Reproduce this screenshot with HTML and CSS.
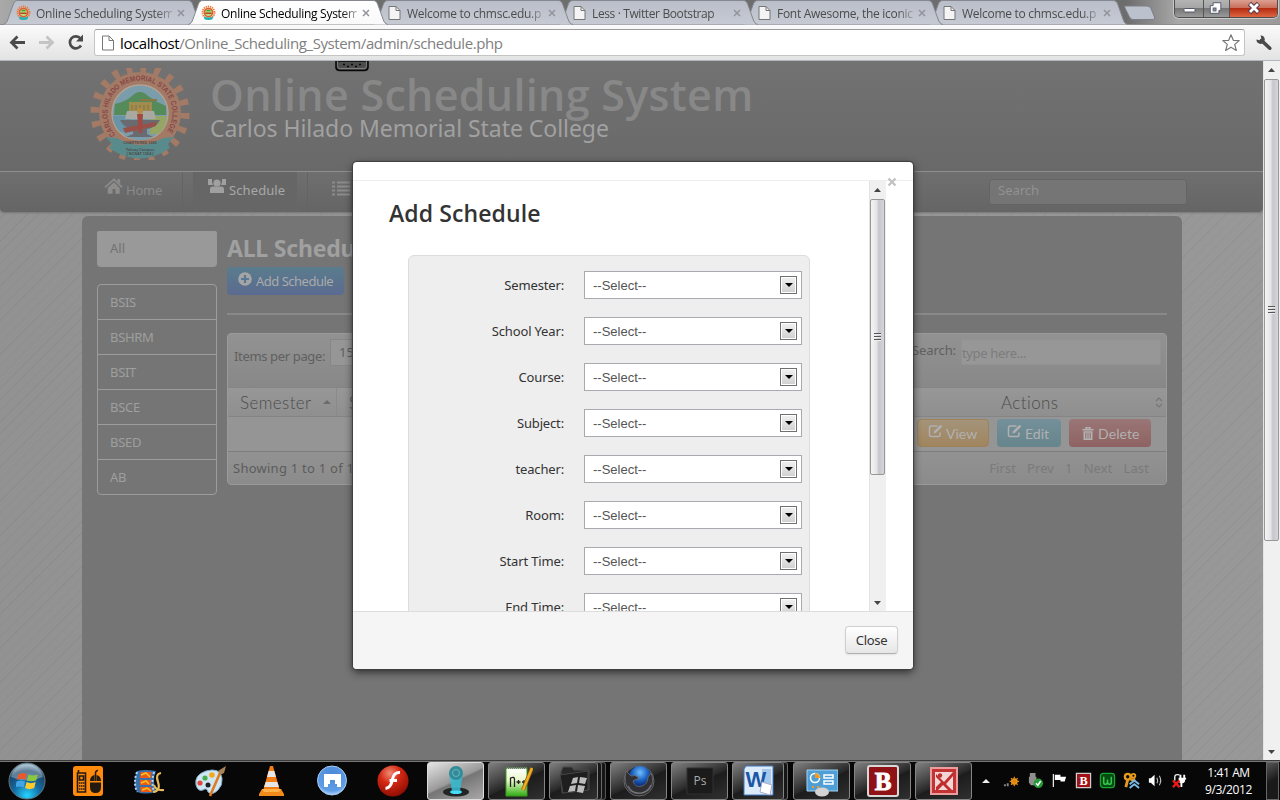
FILE: index.html
```html
<!DOCTYPE html>
<html lang="en">
<head>
<meta charset="utf-8">
<title>Online Scheduling System</title>
<link rel="stylesheet" href="styles.css">
</head>
<body>
<svg width="0" height="0" class="defs">
  <defs>
    <linearGradient id="tabg" x1="0" y1="0" x2="0" y2="1"><stop offset="0" stop-color="#b9bec9"/><stop offset="1" stop-color="#c5cad3"/></linearGradient>
    <linearGradient id="tabw" x1="0" y1="0" x2="0" y2="1"><stop offset="0" stop-color="#ffffff"/><stop offset="1" stop-color="#f9f9f9"/></linearGradient>
    <radialGradient id="orb" cx=".5" cy=".9" r=".85"><stop offset="0" stop-color="#25d4ff"/><stop offset=".45" stop-color="#136aa0"/><stop offset=".8" stop-color="#1c4568"/><stop offset="1" stop-color="#8fb0c4"/></radialGradient>
    <radialGradient id="flash" cx=".4" cy=".25" r=".8"><stop offset="0" stop-color="#f08c78"/><stop offset=".4" stop-color="#d42a14"/><stop offset="1" stop-color="#8a0a02"/></radialGradient>
    <radialGradient id="mx" cx=".5" cy=".3" r=".7"><stop offset="0" stop-color="#4a88d8"/><stop offset=".8" stop-color="#5f9de6"/><stop offset="1" stop-color="#b4d4f8"/></radialGradient>
    <radialGradient id="fox" cx=".5" cy=".3" r=".6"><stop offset="0" stop-color="#6fc0ff"/><stop offset=".6" stop-color="#1b5fc0"/><stop offset="1" stop-color="#0a2c72"/></radialGradient>
    <linearGradient id="np" x1="0" y1="0" x2="0" y2="1"><stop offset="0" stop-color="#fff"/><stop offset=".45" stop-color="#e8f6c8"/><stop offset="1" stop-color="#2fae10"/></linearGradient>
    <symbol id="tab" viewBox="0 0 200 25" preserveAspectRatio="none"><path d="M0 24.5C3 24 4 22 5 19L10 5C11 2 12 .5 15 .5H185C188 .5 189 2 190 5L195 19C196 22 197 24 200 24.5" stroke="#85878e"/></symbol>
    <symbol id="doc" viewBox="0 0 14 16"><path d="M1.500 1.500H8.500L12.500 5.500V14.500H1.500Z" fill="#f4f4f4" stroke="#757575"/><path d="M8.500 1.500V5.500H12.500" fill="none" stroke="#757575"/></symbol>
    <symbol id="fav" viewBox="0 0 16 16"><circle cx="8" cy="7.500" r="6.400" fill="none" stroke="#ef7a3c" stroke-width="2" stroke-dasharray="1.4 .8"/><circle cx="8" cy="7.500" r="5.200" fill="#e45a2c"/><circle cx="8" cy="7.500" r="3.600" fill="#b9e07a"/><path d="M4.600 7.500H11.400V9H4.600Z" fill="#b23a2a"/><path d="M5 6Q8 3 11 6Z" fill="#37a040"/><path d="M3 11.500Q8 14 13 11.500L12 15Q8 16 4 15Z" fill="#1fb2b0"/></symbol>
    <symbol id="x" viewBox="0 0 8 8"><path d="M1 1L7 7M7 1L1 7" fill="none" stroke="#92949a" stroke-width="1.500"/></symbol>
    <symbol id="edit" viewBox="0 0 16 14"><path d="M9.500 2H3Q1.500 2 1.500 3.500V11Q1.500 12.500 3 12.500H10.500Q12 12.500 12 11V8.500" fill="none" stroke="#b0b0b0" stroke-width="1.500"/><path d="M5.500 9.500L6 7.300L12.500 .8L14.300 2.500L7.800 9Z" fill="#b0b0b0"/></symbol>
    <symbol id="win" viewBox="0 0 22 20"><path d="M2 4Q6 1.500 10 3.500L8.700 9Q5 7 .8 9Z" fill="#e8592b"/><path d="M11.500 4Q15 6 20 4L18.500 9.500Q14 11 10 9.500Z" fill="#8cc63f"/><path d="M.5 10.500Q4.500 8.500 8.300 10.500L7 16Q3 14 -1 16Z" fill="#41a5e8"/><path d="M9.700 11Q13.500 13 18 11L16.700 16.500Q12 18.500 8.300 16.500Z" fill="#fdca2e"/></symbol>
    <symbol id="bd" viewBox="0 0 32 32"><rect x="1" y="1" width="30" height="30" rx="2" fill="#8f1216" stroke="#d8d8d8" stroke-width="2"/></symbol>
  </defs>
</svg>

<div class="screen">
  <div class="tabstrip">
    <div class="tab t1"><svg class="shape"><use href="#tab" fill="url(#tabg)"/></svg><svg class="ico"><use href="#fav"/></svg><span>Online Scheduling System</span><svg class="cx"><use href="#x"/></svg></div>
    <div class="tab t2"><svg class="shape"><use href="#tab" fill="url(#tabw)"/></svg><svg class="ico"><use href="#fav"/></svg><span>Online Scheduling System</span><svg class="cx"><use href="#x"/></svg></div>
    <div class="tab t3"><svg class="shape"><use href="#tab" fill="url(#tabg)"/></svg><svg class="ico"><use href="#doc"/></svg><span>Welcome to chmsc.edu.p</span><svg class="cx"><use href="#x"/></svg></div>
    <div class="tab t4"><svg class="shape"><use href="#tab" fill="url(#tabg)"/></svg><svg class="ico"><use href="#doc"/></svg><span>Less · Twitter Bootstrap</span><svg class="cx"><use href="#x"/></svg></div>
    <div class="tab t5"><svg class="shape"><use href="#tab" fill="url(#tabg)"/></svg><svg class="ico"><use href="#doc"/></svg><span>Font Awesome, the iconic</span><svg class="cx"><use href="#x"/></svg></div>
    <div class="tab t6"><svg class="shape"><use href="#tab" fill="url(#tabg)"/></svg><svg class="ico"><use href="#doc"/></svg><span>Welcome to chmsc.edu.p</span><svg class="cx"><use href="#x"/></svg></div>
    <svg class="newtab" viewBox="0 0 32 16"><path d="M1 1H23Q26 1 27 3.500L30.500 12Q31.500 14.500 29 14.500H9Q6.500 14.500 5.500 12L1 3Q.4 1 1 1Z" fill="#bcc2cd" stroke="#7d7f86"/></svg>
    <div class="winbtns">
      <div class="wb"><svg viewBox="0 0 28 17"><rect x="9" y="8.500" width="11" height="3.500" rx=".8" fill="#fff" stroke="#55596a"/></svg></div>
      <div class="wb mid"><svg viewBox="0 0 26 17"><path d="M9.500 2.500H17.500V10.500H15.500V13.500H6.500V5.500H9.500Z" fill="#fff" stroke="#55596a"/><rect x="9.500" y="8" width="3" height="3" fill="#999" stroke="#55596a"/></svg></div>
      <div class="wb red"><svg viewBox="0 0 47 17"><path d="M19.500 3.500L28.500 12.500M28.500 3.500L19.500 12.500" stroke="#55384a" stroke-width="4.600"/><path d="M20 4L28 12M28 4L20 12" stroke="#fff" stroke-width="2.800"/></svg></div>
    </div>
  </div>

  <div class="toolbar">
    <svg class="tb-nav" viewBox="0 0 90 35">
      <path d="M25 17.500H12M17.500 11.500L11.500 17.500L17.500 23.500" fill="none" stroke="#4a4a4a" stroke-width="2.800"/>
      <path d="M39 17.500H52M46.500 11.500L52.500 17.500L46.500 23.500" fill="none" stroke="#c4c4c4" stroke-width="2.800"/>
      <path d="M80.500 13.500A6 6 0 1 0 81 20.500" fill="none" stroke="#4a4a4a" stroke-width="2.700"/><path d="M83 9.500V16.500H76Z" fill="#4a4a4a"/>
    </svg>
    <div class="omni">
      <svg class="page" viewBox="0 0 14 16"><path d="M1.500 1H8L12.500 5.500V15H1.500Z" fill="#fff" stroke="#777"/><path d="M8 1V5.500H12.500" fill="none" stroke="#777"/></svg>
      <span class="url"><b>localhost</b>/Online_Scheduling_System/admin/schedule.php</span>
      <svg class="star" viewBox="0 0 20 20"><path d="M10 1.800L12.300 7.300L18.200 7.600L13.700 11.400L15.300 17.400L10 14.200L4.700 17.400L6.300 11.400L1.800 7.600L7.700 7.300Z" fill="#fff" stroke="#777" stroke-width="1.200" stroke-linejoin="round"/></svg>
    </div>
    <svg class="wrench" viewBox="0 0 18 18"><path d="M6.500 6.500L14.800 14.200" stroke="#4a4a4a" stroke-width="3.600" stroke-linecap="round"/><path d="M1.500 5.500A4 4 0 0 0 8.500 8.500A4 4 0 0 0 5.500 1.500L6.500 4.500L4.500 6.200Z" fill="#4a4a4a"/></svg>
  </div>

  <div class="viewport">
    <div class="site">
      <div class="masthead">
        <svg class="seal" viewBox="0 0 100 92">
          <circle cx="50" cy="45" r="45" fill="none" stroke="#a27a66" stroke-width="9" stroke-dasharray="5.800 8.340"/>
          <circle cx="50" cy="45" r="41" fill="#a27a66"/>
          <circle cx="50" cy="45" r="28" fill="#7a9cab" stroke="#b0a294" stroke-width="1.500"/>
          <path d="M25 36Q35 34 42 28Q50 20 58 28Q66 34 76 38V47H24Z" fill="#558a5a"/>
          <path d="M23 48H40V64H30Q23 56 23 48Z" fill="#6794a6"/><path d="M60 48H77Q76 60 68 66H60Z" fill="#94a566"/>
          <path d="M39 34H62V44H39Z" fill="#a08c4f"/><path d="M50 31H67V33H50Z" fill="#8b7743"/><path d="M42 37V42M46 37V42M50 37V42M54 37V42M58 37V42" stroke="#84733f"/><path d="M37 43H64L66 51H35Z" fill="#a9a9a1"/>
          <path d="M30 52H70Q66 60 57 61V66L63 69H36L43 66V61Q34 60 30 52Z" fill="#6a6b71"/>
          <path d="M33 60L66 54V58L35 65Z" fill="#985149"/><path d="M47 46H53L52 65H49Z" fill="#a04a42"/><circle cx="50" cy="43" r="3" fill="#b38c45"/>
          <path d="M29 66Q50 79 71 66L66 74Q50 80 34 74Z" fill="#a27a66"/>
          <path d="M16 69L27 70Q50 84 73 70L84 69L78 76L80 80Q50 101 19 80L22 76Z" fill="#598b8c"/>
          <path id="arc" d="M25.500 66.500A32.500 32.500 0 1 1 74.500 66.500" fill="none"/>
          <text class="seal-top"><textPath href="#arc" textLength="144" lengthAdjust="spacingAndGlyphs">CARLOS HILADO MEMORIAL STATE COLLEGE</textPath></text>
          <text x="50" y="76" class="seal-s">CHARTERED 1983</text>
          <text x="50" y="82.500" class="seal-s">Talisay Campus</text>
          <text x="50" y="87" class="seal-s">( NOSAT 1954 )</text>
        </svg>
        <div class="brand"><div class="b1">Online Scheduling System</div><div class="b2">Carlos Hilado Memorial State College</div></div>
      </div>
      <div class="navbar">
        <div class="nav home"><svg viewBox="0 0 22 18"><path d="M2 9.500L11.500 1L20 9.500" fill="none" stroke="#8c8c8c" stroke-width="1.800"/><path d="M5 10L11.500 4L17.500 10V16H13V11H10V16H5ZM15 1H18V6L15 3Z" fill="#8c8c8c"/></svg><span>Home</span></div>
        <div class="nav sched"><svg viewBox="0 0 18 16"><circle cx="9" cy="5" r="3.600" fill="#a0a0a0"/><path d="M2 15V11Q2 8.500 5 8.500H13Q16 8.500 16 11V15Z" fill="#a0a0a0"/><path d="M0 1H4V4L5 7H0ZM18 1H14V4L13 7H18Z" fill="#a0a0a0"/></svg><span>Schedule</span></div>
        <div class="nav list"><svg viewBox="0 0 18 15"><path d="M0 1.500H3M5 1.500H18M0 5.500H3M5 5.500H18M0 9.500H3M5 9.500H18M0 13.500H3M5 13.500H18" stroke="#8b8b8b" stroke-width="2.200"/></svg></div>
        <div class="nsearch">Search</div>
      </div>
      <div class="container">
        <div class="side">
          <div class="all">All</div>
          <div class="courses"><div>BSIS</div><div>BSHRM</div><div>BSIT</div><div>BSCE</div><div>BSED</div><div>AB</div></div>
        </div>
        <div class="main">
          <h2>ALL Schedule</h2>
          <div class="add"><svg viewBox="0 0 14 14"><circle cx="7" cy="7" r="6.800" fill="#a5a5a5"/><path d="M7 3V11M3 7H11" stroke="#587897" stroke-width="2.200"/></svg><span>Add Schedule</span></div>
          <div class="rule"></div>
          <div class="table">
            <div class="tools"><span class="ipp">Items per page:</span><span class="ippsel">15</span><span class="slabel">Search:</span><span class="sbox">type here...</span></div>
            <div class="thead"><div class="th c1"><span>Semester</span><svg viewBox="0 0 8 4"><path d="M0 4L4 0L8 4Z" fill="#6c6c6c"/></svg></div><div class="th c2"><span>S</span></div><div class="th c3"><span>Actions</span><svg viewBox="0 0 8 11"><path d="M1 4L4 1L7 4M1 7L4 10L7 7" fill="none" stroke="#767676" stroke-width="1.200"/></svg></div></div>
            <div class="trow"><div class="btn view"><svg class="e"><use href="#edit"/></svg><span>View</span></div><div class="btn ed"><svg class="e"><use href="#edit"/></svg><span>Edit</span></div><div class="btn del"><svg class="t" viewBox="0 0 12 13"><path d="M4 2V.7H8V2M.5 2.700H11.500" fill="none" stroke="#b2b2b2" stroke-width="1.400"/><path d="M1.500 4.200H10.500V13H1.500Z" fill="#b2b2b2"/><path d="M3.800 5.500V11.500M6 5.500V11.500M8.200 5.500V11.500" stroke="#966a6a"/></svg><span>Delete</span></div></div>
            <div class="tfoot"><span class="show">Showing 1 to 1 of 1</span><span class="pg">First</span><span class="pg">Prev</span><span class="pg">1</span><span class="pg">Next</span><span class="pg">Last</span></div>
          </div>
        </div>
      </div>
    </div>
    <div class="sbar page-sb">
      <svg class="arr" viewBox="0 0 7 4"><path d="M0 4L3.500 0L7 4Z" fill="#444"/></svg>
      <div class="thumb"><i></i><i></i><i></i></div>
      <svg class="arr" viewBox="0 0 7 4"><path d="M0 0L3.500 4L7 0Z" fill="#444"/></svg>
    </div>
    <svg class="grip" viewBox="0 0 34 11"><path d="M1 0V6Q1 9.500 5 9.500H29Q33 9.500 33 6V0Z" fill="#4c4c4c" stroke="#080808" stroke-width="1.600"/><path d="M2.500 0V4.500Q2.500 7.500 5 7.500H29Q31.500 7.500 31.500 4.500V0" fill="none" stroke="#8a8a8a" stroke-width=".8"/><path d="M8 3.500H10M16 3.500H18M24 3.500H26M12 5.500H14M20 5.500H22" stroke="#080808" stroke-width="1.600"/></svg>

    <div class="modal">
      <div class="mhead"></div>
      <div class="mbody">
        <div class="mscroll">
          <h3>Add Schedule</h3>
          <div class="well">
            <div class="row"><label>Semester:</label><div class="sel"><span>--Select--</span><i></i></div></div>
            <div class="row"><label>School Year:</label><div class="sel"><span>--Select--</span><i></i></div></div>
            <div class="row"><label>Course:</label><div class="sel"><span>--Select--</span><i></i></div></div>
            <div class="row"><label>Subject:</label><div class="sel"><span>--Select--</span><i></i></div></div>
            <div class="row"><label>teacher:</label><div class="sel"><span>--Select--</span><i></i></div></div>
            <div class="row"><label>Room:</label><div class="sel"><span>--Select--</span><i></i></div></div>
            <div class="row"><label>Start Time:</label><div class="sel"><span>--Select--</span><i></i></div></div>
            <div class="row"><label>End Time:</label><div class="sel"><span>--Select--</span><i></i></div></div>
          </div>
        </div>
        <div class="sbar modal-sb">
          <svg class="arr" viewBox="0 0 7 4"><path d="M0 4L3.500 0L7 4Z" fill="#444"/></svg>
          <div class="thumb"><i></i><i></i><i></i></div>
          <svg class="arr" viewBox="0 0 7 4"><path d="M0 0L3.500 4L7 0Z" fill="#444"/></svg>
        </div>
      </div>
      <svg class="mclose" viewBox="0 0 10 10"><path d="M1.500 1.500L8.500 8.500M8.500 1.500L1.500 8.500" stroke="#c2c2c2" stroke-width="2.400"/></svg>
      <div class="mfoot"><div class="closebtn">Close</div></div>
    </div>
  </div>

  <div class="taskbar">
    <div class="start"><svg width="38" height="38" viewBox="0 0 38 38"><circle cx="19" cy="19" r="18" fill="url(#orb)" stroke="#63757f"/><path d="M3 15A16.500 16.500 0 0 1 35 15Q19 22 3 15Z" fill="#fff" opacity=".3"/><use href="#win" x="8" y="8" width="24" height="22"/></svg></div>
    <div class="q"><svg viewBox="0 0 32 32"><rect x="1" y="1" width="30" height="30" rx="3" fill="#ff8a0c"/><g fill="none" stroke="#231a12" stroke-width="1.600"><path d="M5.500 8H13.500V27H5.500ZM6.500 5V8M7.500 11H11.500V15H7.500Z"/><path d="M23.500 16V11Q23 5 26 5.500"/></g><path d="M7 18H8.500M9 18H10.500M11 18H12.500M7 21H8.500M9 21H10.500M11 21H12.500M7 24H8.500M9 24H10.500M11 24H12.500" stroke="#231a12" stroke-width="1.600"/><path d="M18 16Q18 11 22.500 10V16ZM24.500 10Q29 11 29 16H24.500ZM18 17.500H29V22Q29 28 23.500 28Q18 28 18 22Z" fill="#231a12"/></svg></div>
    <div class="q"><svg viewBox="0 0 32 32"><path d="M4 6Q12 4 23 6Q19 15 23 27Q12 30 4 27Q-1 17 4 6Z" fill="#3a6fa8"/><path d="M8 7H18.500L18 13H7ZM7 15H18V20H7ZM7 22H18L19 27H8Z" fill="#ed5a18"/><path d="M8 10L13 8L17 12M8 18L13 16L16 19M9 25L14 23L18 26" stroke="#f9c21c" stroke-width="1.500" fill="none"/><path d="M4 7Q0 17 4 27M21 7Q18 17 21 27" fill="none" stroke="#b3d6f2" stroke-width="2" stroke-dasharray="2 2"/><path d="M28 8Q22 9 25 17Q28 26 20 27M21 20Q23 26 31 25" fill="none" stroke="#e7b95a" stroke-width="2.200"/></svg></div>
    <div class="q"><svg viewBox="0 0 32 32"><path d="M2 20Q0 10 12 6Q26 2 28 13Q29 20 24 25Q18 31 14 27Q13 22 9 25Q4 27 2 20Z" fill="#cfe7f5" stroke="#7eaac6"/><circle cx="6" cy="18" r="2.600" fill="#e04a3c"/><circle cx="11" cy="13" r="2.600" fill="#48b04a"/><circle cx="18" cy="10" r="2.800" fill="#f5a81c"/><circle cx="14" cy="20" r="2.500" fill="#222"/><path d="M26 8L16 31" stroke="#e07b1e" stroke-width="2.600"/><path d="M24 6L32 1L30 8L26 10Z" fill="#a98355"/></svg></div>
    <div class="q"><svg viewBox="0 0 32 32"><path d="M15 1H18L25 26H8Z" fill="#f27d14"/><path d="M13.600 6H19.300L21 12H12ZM10.700 17H22.300L24 22H9Z" fill="#e6e6e6"/><path d="M7 24H26L29 29V31H4V29Z" fill="#f08a1a"/><path d="M7 24H26L24 27H9Z" fill="#ffb14a"/></svg></div>
    <div class="q"><svg viewBox="0 0 32 32"><circle cx="16" cy="15.500" r="14.500" fill="url(#mx)" stroke="#a4caf4"/><path d="M8 9H25V22H21V19H19V15H14V19H12V22H8Z" fill="#fff"/></svg></div>
    <div class="q"><svg viewBox="0 0 32 32"><circle cx="16" cy="16" r="15.500" fill="url(#flash)"/><path d="M23 7.500Q17 7 15.500 14Q14 23 8.500 23.500M12.500 15.500H20" fill="none" stroke="#fff" stroke-width="3"/></svg></div>
    <div class="apps">
      <div class="app on"><svg viewBox="0 0 32 32"><ellipse cx="16" cy="27" rx="13" ry="4.500" fill="#202526"/><ellipse cx="16" cy="27" rx="6" ry="2" fill="#47ddf8"/><path d="M9 8L12 26H20L23 8Z" fill="#35bcd4" opacity=".85"/><circle cx="16" cy="8" r="7" fill="#328b98"/><circle cx="16" cy="8" r="3.500" fill="none" stroke="#6cb7bf"/></svg></div>
      <div class="app"><svg viewBox="0 0 32 32"><path d="M5 3H26V31H5Z" fill="url(#np)" stroke="#3b9c21"/><path d="M5 3H26" stroke="#777" stroke-dasharray="1 1" stroke-width="2"/><path d="M9.500 22V13Q13.500 11.500 13.500 14V22M15.500 17H19.500M17.500 15V19M21 17H25M23 15V19" fill="none" stroke="#222" stroke-width="1.300"/><path d="M31 3L22 25" stroke="#8d5b12" stroke-width="4"/><path d="M31 3L22 25" stroke="#f0ae1e" stroke-width="2.500"/></svg></div>
      <div class="app stack"><svg viewBox="0 0 32 32"><path d="M3 7L5 2H14L16 5H31V25L4 28Z" fill="#292929" stroke="#4a4a4a"/><path d="M2 10L30 6V25L5 28Z" fill="#1e1e1e" stroke="#444"/><path d="M15 13L20 12L19 18L13 19ZM22 12L29 13L27 19L21 18ZM12 21L18 20L17 26L10 27ZM20 20L27 21L25 28L19 27Z" fill="#bdbdbd"/></svg></div>
      <div class="app"><svg viewBox="0 0 32 32"><circle cx="16" cy="16" r="15" fill="#29292b" stroke="#66666a"/><circle cx="17" cy="12" r="11" fill="url(#fox)"/><path d="M3 6L8 11Q12 9 16 13L10 16Q12 23 19 21Q25 19 25 12L28 8Q32 17 26 25Q17 32 7 26Q0 19 3 6Z" fill="#303034" stroke="#707076" stroke-width=".8"/><path d="M5 21Q9 29 18 28Q25 27 28 20" fill="none" stroke="#77777c" stroke-width="1.200"/></svg></div>
      <div class="app"><svg viewBox="0 0 32 32"><path d="M3 3H29V29H3Z" fill="#1b1b1b" stroke="#303030"/><text x="16" y="20" class="ps">Ps</text></svg></div>
      <div class="app stack2"><svg viewBox="0 0 32 32"><path d="M4 1H31V30H2V4Z" fill="#dcebf9" stroke="#4078c0"/><path d="M20 4H29V25H20Z" fill="#a6c8ec"/><text x="14" y="22" class="wd">W</text><path d="M20 17L30 20L28 30L18 27Z" fill="#fff" stroke="#aac"/></svg></div>
      <div class="app"><svg viewBox="0 0 32 32"><path d="M1 5H32V26H1Z" fill="#4f9fd6" stroke="#a3d4f3"/><circle cx="9" cy="13" r="4.500" fill="none" stroke="#fff" stroke-width="1.500"/><path d="M9 13V8A5 5 0 0 1 14 13Z" fill="#f39a1c"/><path d="M18 10H27V13H18ZM18 16H27V19H18Z" fill="none" stroke="#fff" stroke-width="1.500"/><path d="M6 22H8M11 22H13" stroke="#f39a1c" stroke-width="2"/><ellipse cx="16" cy="27" rx="7" ry="4.500" fill="#d4d4d4"/></svg></div>
      <div class="app"><svg viewBox="0 0 32 32"><use href="#bd"/><text x="16" y="24.500" class="bt">B</text></svg></div>
      <div class="app"><svg viewBox="0 0 32 32"><path d="M3 3H29V29H3Z" fill="#c23434" stroke="#eb9c9c" stroke-width="2"/><path d="M7 7H25V25H7Z" fill="#f3d6d6"/><path d="M8 9L16 17L25 7V11L18 19L24 25H20L15 20L10 25H8V22L13 17L8 12Z" fill="#c02c2c"/><circle cx="12" cy="10.500" r="2.200" fill="#c02c2c"/></svg></div>
    </div>
    <div class="chev"><svg viewBox="0 0 8 4"><path d="M0 4L4 0L8 4Z" fill="#eee"/></svg></div>
    <div class="tray">
      <svg viewBox="0 0 18 18"><circle cx="12" cy="10" r="3.500" fill="#ffb01e"/><path d="M12 5V15M7 10H17M8.500 6.500L15.500 13.500M15.500 6.500L8.500 13.500" stroke="#dd8616" stroke-width="1.300"/><path d="M1 13H3V15H1ZM4 12H6V15H4Z" fill="#888"/></svg>
      <svg viewBox="0 0 18 18"><path d="M3 1H9V5H3ZM2 5H10V11L8 14H4L2 11Z" fill="#8f8f8f"/><circle cx="12" cy="12" r="5" fill="#279b37"/><path d="M9.500 12L11.500 14L14.500 9.500" stroke="#fff" stroke-width="1.600" fill="none"/></svg>
      <svg viewBox="0 0 18 18"><path d="M2.500 2V16" stroke="#eee" stroke-width="1.300"/><path d="M4 3H10V5H16L14.500 10H10V8.500H4Z" fill="#fff"/></svg>
      <svg viewBox="0 0 18 18"><path d="M1.500 1.500H16.500V16.500H1.500Z" fill="#a01218" stroke="#ccc" stroke-width="1.300"/><text x="9" y="14" class="bs">B</text></svg>
      <svg viewBox="0 0 18 18"><rect x="1.500" y="1.500" width="15" height="15" rx="3" fill="#064b12" stroke="#18a632" stroke-width="1.300"/><path d="M5 5V11Q5 13 7 13Q9 13 9 10V8V10Q9 13 11 13Q13 13 13 11V5" fill="none" stroke="#36c64c" stroke-width="1.600"/></svg>
      <svg viewBox="0 0 18 18"><circle cx="5" cy="5" r="3" fill="none" stroke="#e69b1e" stroke-width="2.500"/><circle cx="11" cy="4" r="2" fill="none" stroke="#e69b1e" stroke-width="2"/><path d="M5 8L3 16M8 8H13" stroke="#e69b1e" stroke-width="3"/><path d="M7 13L12 9L17 13M7 17L12 13L17 17" fill="none" stroke="#79bce8" stroke-width="2"/></svg>
      <svg viewBox="0 0 18 18"><path d="M2 6.500H4L8 3V15L4 11.500H2Z" fill="#fff"/><path d="M10.500 6Q12 9 10.500 12M13 4Q16 9 13 14" fill="none" stroke="#bbb" stroke-width="1.200"/></svg>
      <svg viewBox="0 0 18 18"><path d="M4 9V5Q4 2 9 3" fill="none" stroke="#eee" stroke-width="1.500"/><path d="M8 6H16V8H15Q15 12 12 12V16H10V12Q8 11 8 6ZM9 3H11V6H9ZM13 3H15V6H13Z" fill="#fff"/><path d="M2 9L9 16M9 9L2 16" stroke="#f01818" stroke-width="2.400"/></svg>
    </div>
    <div class="clock"><div>1:41 AM</div><div>9/3/2012</div></div>
    <div class="desk"></div>
  </div>
</div>
</body>
</html>
```
FILE: styles.css
```css
* { box-sizing: border-box; }
body { margin: 0; }
.defs { position: absolute; }
.screen { width: 1280px; height: 800px; overflow: hidden; display: flex; flex-direction: column; font-family: "Open Sans", "Noto Sans", sans-serif; }
svg { display: block; flex: none; }
span { white-space: nowrap; }

/* browser chrome */
.tabstrip { height: 25px; display: flex; padding-left: 3px; background: linear-gradient(90deg, #a9a9a9, #6d6d6d 12%, #6d6d6d 88%, #a8a8a8 92%, #9a9a9a); border-bottom: 1px solid #8c8c8c; position: relative; flex: none; }
.tab { width: 200px; height: 25px; margin-right: -15px; padding: 1px 0 0 13px; display: flex; align-items: center; position: relative; flex: none; font-size: 12px; color: #4c4c4c; letter-spacing: -0.28px; }
.tab .shape { position: absolute; left: 0; top: 0; width: 200px; height: 25px; z-index: -1; }
.t1 { z-index: 6; } .t2 { z-index: 8; color: #000; } .t3 { z-index: 5; } .t4 { z-index: 4; } .t5 { z-index: 3; } .t6 { z-index: 2; }
.ico { width: 15px; height: 16px; margin-right: 5px; }
.tab span { width: 136px; overflow: hidden; margin-right: 5px; -webkit-mask-image: linear-gradient(90deg, #000 120px, transparent 142px); mask-image: linear-gradient(90deg, #000 120px, transparent 142px); }
.t3 .ico, .t4 .ico, .t5 .ico, .t6 .ico { margin-left: 1px; }
.t4 span { letter-spacing: -0.38px; }
.cx { width: 8px; height: 8px; }
.newtab { width: 32px; height: 16px; margin: 5px 0 0 11px; }
.winbtns { position: absolute; left: 1174px; top: 0; height: 18px; width: 104px; display: flex; border: 1px solid #4e4e4e; border-top: 0; border-radius: 0 0 5px 5px; overflow: hidden; box-shadow: 0 0 0 1px #c9c9c9; }
.wb { width: 28px; height: 17px; background: linear-gradient(#b4b4b4, #a4a4a4 48%, #767676 50%, #9a9a9a); }
.wb svg { width: 100%; height: 17px; }
.mid { width: 27px; border: solid #555; border-width: 0 1px; }
.red { flex: 1; background: linear-gradient(#dba092, #c9705c 45%, #b52d13 50%, #df6540); }
.toolbar { height: 36px; flex: none; background: linear-gradient(#fafafa, #e3e3e3); display: flex; align-items: center; border-bottom: 1px solid #b2b6bf; }
.tb-nav { width: 90px; height: 35px; margin-right: 4px; }
.omni { width: 1151px; height: 27px; background: #fff; border: 1px solid #c4c4c4; border-top-color: #9c9c9c; border-radius: 3px; display: flex; align-items: center; padding-left: 6px; }
.page { width: 14px; height: 16px; margin-right: 5px; }
.url { font-size: 15px; letter-spacing: -0.4px; color: #808080; flex: 1; }
.url b { font-weight: 400; color: #000; }
.star { width: 20px; height: 20px; margin-right: 3px; }
.wrench { width: 18px; height: 18px; margin-left: 10px; }

/* page */
.viewport { height: 699px; display: flex; position: relative; flex: none; overflow: hidden; }
.site { width: 1263px; height: 699px; flex: none; display: flex; flex-direction: column; background: repeating-linear-gradient(135deg, transparent 0 7px, rgba(0,0,0,.035) 7px 8px), linear-gradient(90deg, #929292, #989898); font-family: "Noto Sans", "Open Sans", sans-serif; }
.masthead { height: 110px; flex: none; background: linear-gradient(#727272, #696969); display: flex; padding: 7px 0 0 90px; }
.seal { width: 100px; height: 92px; }
.seal-top { font: 700 7.5px "Liberation Sans", sans-serif; fill: #884747; }
.seal-s { font: 700 3.8px "Liberation Sans", sans-serif; fill: #4c4c4c; text-anchor: middle; }
.brand { margin-left: 20px; }
.b1 { font-size: 43px; line-height: 44px; margin-top: 5px; font-weight: 600; color: #888; white-space: nowrap; font-family: "Open Sans", sans-serif; letter-spacing: 0.3px; }
.b2 { font-size: 23px; line-height: 22px; color: #a1a1a1; white-space: nowrap; letter-spacing: -0.05px; }
.navbar { height: 41px; flex: none; border-top: 1px solid #8f8f8f; border-radius: 0 0 4px 4px; background: linear-gradient(#6f6f6f, #656565); box-shadow: 0 1px 2px #777; display: flex; font-size: 13px; color: #8a8a8a; }
.nav { display: flex; align-items: center; height: 40px; }
.nav span { margin-top: -4px; }
.home { width: 183px; padding-left: 103px; border-right: 1px solid #646464; letter-spacing: -0.2px; }
.home svg { width: 21px; height: 18px; margin: -11px 2px 0 0; }
.sched { margin-left: 10px; width: 104px; background: #666; padding-left: 15px; color: #a8a8a8; letter-spacing: 0.1px; }
.sched svg { width: 18px; height: 16px; margin: -12px 3px 0 0; }
.list { margin-left: 10px; padding-left: 24px; border-left: 1px solid #646464; width: 682px; }
.list svg { width: 18px; height: 15px; margin-top: -7px; }
.nsearch { width: 198px; height: 26px; margin-top: 7px; background: #757575; border: 1px solid #646464; border-radius: 3px; padding: 0 8px; line-height: 21px; color: #929292; flex: none; }
.container { width: 1100px; margin: 4px 0 0 82px; flex: 1; background: #757575; border-radius: 6px 6px 0 0; display: flex; padding: 15px; font-size: 13px; }
.side { width: 120px; color: #9f9f9f; }
.all { height: 36px; background: #999; border-radius: 2px 2px 4px 4px; padding-left: 13px; line-height: 35px; color: #727272; }
.courses { margin-top: 17px; border: 1px solid #9c9c9c; border-radius: 4px; }
.courses div { height: 35px; line-height: 34px; padding-left: 12px; border-bottom: 1px solid #9c9c9c; letter-spacing: -0.3px; }
.courses div:last-child { border: 0; height: 34px; }
.main { width: 940px; margin-left: 10px; display: flex; flex-direction: column; }
.main h2 { margin: 0; font-size: 23px; line-height: 34px; height: 36px; font-weight: 700; color: #a0a0a0; letter-spacing: -0.2px; white-space: nowrap; }
.add { width: 117px; height: 28px; background: linear-gradient(#5a7c8d, #5b6b90); border-radius: 4px; display: flex; align-items: center; padding-left: 11px; color: #aaa; letter-spacing: -0.5px; }
.add svg { width: 14px; height: 14px; margin: -4px 4px 0 0; }
.rule { height: 2px; background: #898989; margin: 18px 0 18px; }
.table { height: 152px; border: 1px solid #9a9a9a; border-radius: 4px; background: #888; overflow: hidden; }
.tools { height: 53px; display: flex; padding: 5px 5px 0 6px; background: linear-gradient(#929292, #888); color: #606060; }
.ipp { width: 96px; line-height: 34px; letter-spacing: -0.35px; }
.ippsel { width: 90px; height: 27px; background: #969696; border: 1px solid #878787; line-height: 25px; padding-left: 8px; }
.slabel { margin-left: auto; line-height: 22px; letter-spacing: -0.1px; }
.sbox { width: 200px; height: 26px; margin-left: 5px; background: #979797; border: 1px solid #929292; border-radius: 2px; line-height: 26px; color: #7c7c7c; letter-spacing: -0.35px; }
.thead { height: 30px; border: solid #858585; border-width: 1px 0; background: linear-gradient(#979797, #8f8f8f); display: flex; font: 300 17px Lato, sans-serif; color: #4c4c4c; }
.th { display: flex; align-items: center; }
.c1 { width: 109px; padding-left: 12px; border-right: 1px solid #8a8a8a; letter-spacing: .4px; }
.c1 svg { width: 8px; height: 4px; margin-left: auto; margin-right: 5px; }
.c2 { width: 564px; padding-left: 12px; }
.c3 { flex: 1; padding-left: 100px; letter-spacing: .4px; }
.c3 svg { width: 8px; height: 11px; margin-left: auto; margin-right: 3px; }
.trow { height: 34px; display: flex; justify-content: flex-end; gap: 8px; padding: 2px 15px 0; background: #959595; font: 14px Lato, sans-serif; color: #b1b1b1; }
.btn { height: 28px; border-radius: 4px; display: flex; align-items: center; padding-left: 10px; gap: 2px; }
.e { width: 16px; height: 14px; margin-top: -4px; }
.t { width: 12px; height: 13px; margin-right: 2px; }
.view { width: 72px; background: linear-gradient(#a4947a, #a0855f); border: 1px solid #9d8258; }
.ed { width: 64px; background: linear-gradient(#74919b, #66848c); }
.del { width: 82px; background: linear-gradient(#9a7676, #8e6262); padding-left: 13px; }
.del span { letter-spacing: .1px; }
.tfoot { height: 34px; border-top: 1px solid #7d7d7d; background: linear-gradient(#929292, #8b8b8b); display: flex; line-height: 33px; padding: 0 17px 0 5px; gap: 11px; color: #7a7a7a; letter-spacing: .1px; }
.show { margin-right: auto; color: #5c5c5c; letter-spacing: .25px; }

/* scrollbars */
.sbar { width: 16px; background: #f0f0f0; border-left: 1px solid #e3e3e3; display: flex; flex-direction: column; align-items: center; justify-content: space-between; }
.arr { width: 7px; height: 4px; }
.thumb { width: 15px; background: linear-gradient(90deg, #f5f5f5, #e4e4e6 45%, #c6c6cc 60%, #d5d5da); border: 1px solid #979797; border-radius: 2px; display: flex; flex-direction: column; align-items: center; justify-content: center; gap: 1px; }
.thumb i { width: 7px; height: 2px; background: #555; border-bottom: 1px solid #eee; }
.page-sb { width: 17px; padding: 7px 1px 6px 0; }
.page-sb .thumb { height: 462px; margin-top: 7px; margin-bottom: auto; }
.grip { position: absolute; left: 335px; top: 0; width: 34px; height: 11px; }

/* dialog */
.modal { position: absolute; left: 353px; top: 101px; width: 560px; height: 507px; background: #fff; border-radius: 4px; box-shadow: 0 0 1px 1px #3f3f3f, 0 3px 8px rgba(0,0,0,.65); display: flex; flex-direction: column; overflow: hidden; color: #333; font-family: "Noto Sans", "Open Sans", sans-serif; font-size: 13px; }
.mhead { height: 19px; border-bottom: 1px solid #eee; flex: none; }
.mbody { height: 430px; display: flex; overflow: hidden; flex: none; }
.mscroll { width: 516px; height: 430px; overflow: hidden; padding: 14px 0 0 36px; flex: none; }
.mscroll h3 { margin: 0; font-size: 23px; line-height: 36px; height: 60px; letter-spacing: 0.1px; font-weight: 600; font-family: "Open Sans", sans-serif; }
.well { margin-left: 19px; width: 402px; height: 420px; background: #eee; border: 1px solid #dcdcdc; border-radius: 6px; padding: 15px 7px 0 0; }
.row { display: flex; height: 28px; margin-bottom: 18px; }
.row label { width: 155px; text-align: right; line-height: 28px; margin-right: 20px; letter-spacing: -0.15px; }
.sel { width: 218px; height: 28px; background: #fff; border: 1px solid #a9a9b0; display: flex; align-items: center; justify-content: space-between; padding: 0 4px 0 8px; font: 13px "Liberation Sans", Arial, sans-serif; color: #555; }
.sel i { width: 17px; height: 18px; border: 1px solid #707070; background: linear-gradient(#f2f2f2, #cfcfcf); box-shadow: inset 0 0 0 1px #fff; display: flex; align-items: center; justify-content: center; }
.sel i::after { content: ""; border: solid transparent; border-width: 4px 4px 0; border-top-color: #000; }
.modal-sb { width: 17px; padding: 7px 1px 6px 0; }
.modal-sb .thumb { height: 276px; margin-top: 7px; margin-bottom: auto; }
.mclose { position: absolute; left: 534px; top: 15px; width: 10px; height: 10px; }
.mfoot { flex: 1; background: #f5f5f5; border-top: 1px solid #ddd; display: flex; justify-content: flex-end; padding: 14px 15px; }
.closebtn { width: 53px; height: 28px; background: linear-gradient(#fff, #e6e6e6); border: 1px solid #d0d0d0; border-bottom-color: #b0b0b0; border-radius: 4px; text-align: center; line-height: 26px; letter-spacing: -0.3px; box-shadow: 0 1px 2px rgba(0,0,0,.08); }

/* taskbar */
.taskbar { height: 40px; flex: none; background: #070707; border-top: 1px solid #3a3a3a; box-shadow: inset 0 1px #777; display: flex; align-items: center; }
.start { width: 57px; padding-left: 8px; }
.q { width: 61px; display: flex; justify-content: center; }
.q svg { width: 32px; height: 32px; }
.apps { width: 550px; padding-left: 4px; display: flex; gap: 4px; }
.app { width: 57px; height: 38px; border: 1px solid #858585; border-radius: 3px; background: linear-gradient(155deg, #808080, #454545 35%, #262626 52%, #1c1c1c 54%, #303030); display: flex; align-items: center; justify-content: center; flex: none; }
.app svg { width: 32px; height: 32px; }
.app.on { background: linear-gradient(155deg, #e4e4e4, #9a9a9a 48%, #757575 52%, #a9a9a9); border-color: #ddd; }
.stack { width: 49px; margin-right: 8px; box-shadow: 4px 0 0 -1px #161616, 4px 0 0 0 #666, 8px 0 0 -1px #161616, 8px 0 0 0 #555; }
.stack2 { width: 52px; margin-right: 5px; box-shadow: 4px 0 0 -1px #161616, 4px 0 0 0 #666; }
.ps { font: 12px "Open Sans", sans-serif; fill: #aaa; text-anchor: middle; }
.wd { font: 700 22px "Liberation Sans", sans-serif; fill: #1b57a6; text-anchor: middle; }
.bt { font: 700 25px "Liberation Serif", serif; fill: #fff; stroke: #fff; text-anchor: middle; }
.bs { font: 700 13px "Liberation Serif", serif; fill: #fff; text-anchor: middle; }
.chev { width: 26px; padding-left: 9px; }
.chev svg { width: 8px; height: 4px; }
.tray { width: 192px; display: flex; justify-content: space-around; }
.tray svg { width: 17px; height: 17px; }
.clock { width: 75px; color: #fff; font-size: 12px; line-height: 17px; text-align: center; letter-spacing: -0.4px; }
.desk { width: 13px; height: 38px; border: 1px solid #666; background: linear-gradient(150deg, #555, #1a1a1a 50%); }
```
